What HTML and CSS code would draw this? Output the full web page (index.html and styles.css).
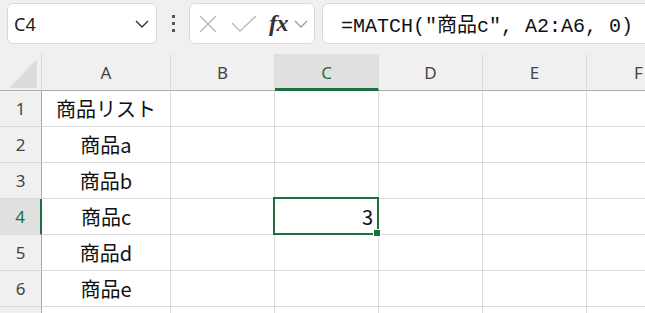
FILE: index.html
```html
<!DOCTYPE html>
<html lang="ja">
<head>
    <meta charset="UTF-8">
    <title>MATCH</title>
    <link rel="stylesheet" href="styles.css">
</head>
<body>
    <div class="toolbar">
        <div class="name-box">
            <span class="cell-ref">C4</span>
            <svg class="chev" width="14" height="8" viewBox="0 0 14 8"><path d="M1 1l6 6 6-6" fill="none" stroke="#333" stroke-width="1.4"/></svg>
        </div>
        <div class="dots"><i></i><i></i><i></i></div>
        <div class="fx-box">
            <svg width="20" height="20" viewBox="0 0 20 20"><path d="M2 2l16 16M18 2L2 18" stroke="#bdbdbd" stroke-width="1.5" fill="none"/></svg>
            <svg width="26" height="18" viewBox="0 0 26 18"><path d="M1 8l8 8L25 1" stroke="#bdbdbd" stroke-width="1.5" fill="none"/></svg>
            <span class="fx">fx</span>
            <svg width="14" height="8" viewBox="0 0 14 8"><path d="M1 1l6 6 6-6" fill="none" stroke="#9a9a9a" stroke-width="1.3"/></svg>
        </div>
        <div class="formula">=MATCH("商品c", A2:A6, 0)</div>
    </div>

    <div class="sheet-wrap">
        <div class="sheet">
            <div class="corner"><svg width="28" height="29" viewBox="0 0 28 29"><path d="M28 0V29H0Z" fill="#dcdcdc"/></svg></div>
            <div class="col-head">A</div>
            <div class="col-head">B</div>
            <div class="col-head active">C</div>
            <div class="col-head">D</div>
            <div class="col-head">E</div>
            <div class="col-head">F</div>

            <div class="row-head">1</div>
            <div class="cell center">商品リスト</div><div class="cell"></div><div class="cell"></div><div class="cell"></div><div class="cell"></div><div class="cell"></div>

            <div class="row-head">2</div>
            <div class="cell center">商品a</div><div class="cell"></div><div class="cell"></div><div class="cell"></div><div class="cell"></div><div class="cell"></div>

            <div class="row-head">3</div>
            <div class="cell center">商品b</div><div class="cell"></div><div class="cell"></div><div class="cell"></div><div class="cell"></div><div class="cell"></div>

            <div class="row-head active">4</div>
            <div class="cell center">商品c</div><div class="cell"></div><div class="cell selected">3</div><div class="cell"></div><div class="cell"></div><div class="cell"></div>

            <div class="row-head">5</div>
            <div class="cell center">商品d</div><div class="cell"></div><div class="cell"></div><div class="cell"></div><div class="cell"></div><div class="cell"></div>

            <div class="row-head">6</div>
            <div class="cell center">商品e</div><div class="cell"></div><div class="cell"></div><div class="cell"></div><div class="cell"></div><div class="cell"></div>

            <div class="row-head"></div>
            <div class="cell"></div><div class="cell"></div><div class="cell"></div><div class="cell"></div><div class="cell"></div><div class="cell"></div>
        </div>
    </div>
</body>
</html>
```

FILE: styles.css
```css
html, body {
    margin: 0;
    height: 313px;
    overflow: hidden;
}
body {
    background-color: #f0f0f0;
    font-family: "Noto Sans", "Noto Sans CJK JP", sans-serif;
    color: #222;
}
.toolbar {
    display: flex;
    align-items: center;
    height: 41px;
    padding: 3px 0 0 7px;
    overflow: hidden;
}
.name-box {
    flex-shrink: 0;
    box-sizing: border-box;
    width: 150px;
    height: 41px;
    background: #fff;
    border: 1px solid #d9d9d9;
    border-radius: 6px;
    display: flex;
    align-items: center;
    justify-content: space-between;
    padding: 0 7px 0 6px;
}
.cell-ref {
    font-size: 18px;
    color: #222;
}
.dots {
    flex-shrink: 0;
    width: 32px;
    display: flex;
    flex-direction: column;
    align-items: center;
    gap: 4px;
}
.dots i {
    width: 3px;
    height: 3px;
    background: #555;
}
.fx-box {
    flex-shrink: 0;
    box-sizing: border-box;
    width: 126px;
    height: 41px;
    background: #fff;
    border: 1px solid #d9d9d9;
    border-radius: 6px;
    display: flex;
    align-items: center;
    padding: 0 4px 0 8px;
}
.fx-box svg:nth-child(1) {
    margin-right: 13px;
}
.fx-box svg:nth-child(2) {
    margin-right: 12px;
}
.fx {
    font-family: "Liberation Serif", serif;
    font-style: italic;
    font-weight: bold;
    font-size: 24px;
    color: #333;
    margin-right: 6px;
    letter-spacing: -0.5px;
}
.formula {
    flex-shrink: 0;
    box-sizing: border-box;
    margin-left: 7px;
    width: 340px;
    height: 41px;
    background: #fff;
    border: 1px solid #d9d9d9;
    border-radius: 6px;
    display: flex;
    align-items: center;
    padding-left: 18px;
    font-family: "Liberation Mono", "Noto Sans CJK JP", monospace;
    font-size: 20px;
    color: #111;
    white-space: nowrap;
}
.sheet-wrap {
    margin-top: 10px;
    overflow: hidden;
    height: 269px;
}
.sheet {
    display: grid;
    grid-template-columns: 42px 129px repeat(5, 104px);
    grid-template-rows: 37px repeat(7, 36px);
    background: #fff;
    width: 690px;
}
.corner,
.col-head,
.row-head {
    box-sizing: border-box;
    background: #f0f0f0;
    color: #444;
    font-size: 17px;
    display: flex;
    align-items: center;
    justify-content: center;
}
.corner {
    border-right: 1px solid #dadada;
    border-bottom: 1px solid #ababab;
    align-items: flex-start;
    justify-content: flex-start;
    padding: 5px 0 0 9px;
}
.col-head {
    border-right: 1px solid #dadada;
    border-bottom: 1px solid #ababab;
    padding-top: 1px;
}
.col-head.active {
    background: #e0e0e0;
    color: #1e6e42;
    border-bottom: 3px solid #1e6e42;
    padding-top: 3px;
}
.row-head {
    border-right: 1px solid #ababab;
    border-bottom: 1px solid #dadada;
}
.row-head.active {
    background: #e0e0e0;
    color: #1e6e42;
    border-right: 2px solid #1e6e42;
}
.cell {
    box-sizing: border-box;
    border-right: 1px solid #dadada;
    border-bottom: 1px solid #dadada;
    font-family: "Noto Sans CJK JP", sans-serif;
    font-size: 20px;
    color: #111;
    display: flex;
    align-items: center;
    line-height: 1;
}
.cell.center {
    justify-content: center;
}
.cell.selected {
    position: relative;
    justify-content: flex-end;
    padding-right: 5px;
}
.cell.selected::after {
    content: "";
    position: absolute;
    top: -2px;
    left: -2px;
    right: -1px;
    bottom: -1px;
    border: 2px solid #1e6e42;
}
.cell.selected::before {
    content: "";
    position: absolute;
    right: -3px;
    bottom: -3px;
    width: 6px;
    height: 6px;
    background: #1e6e42;
    border: 1px solid #fff;
    z-index: 1;
}
```
